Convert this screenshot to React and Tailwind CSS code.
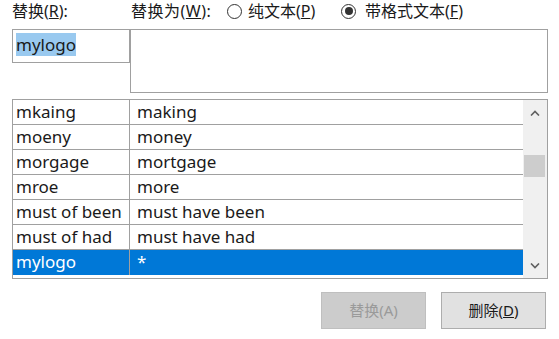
import React from 'react';

const rows = [
  ['mkaing', 'making'],
  ['moeny', 'money'],
  ['morgage', 'mortgage'],
  ['mroe', 'more'],
  ['must of been', 'must have been'],
  ['must of had', 'must have had'],
  ['mylogo', '*'],
];

function Radio({ checked }) {
  return (
    <span className="inline-flex shrink-0 items-center justify-center w-[15px] h-[15px] rounded-full border border-[#333] bg-white">
      {checked && <span className="w-[8px] h-[8px] rounded-full bg-[#333]" />}
    </span>
  );
}

function Chevron({ up }) {
  return (
    <svg width="10" height="6" viewBox="0 0 10 6" fill="none" stroke="#606060" strokeWidth="1.6">
      {up ? <path d="M1 5.5 L5 1.5 L9 5.5" /> : <path d="M1 0.5 L5 4.5 L9 0.5" />}
    </svg>
  );
}

export default function App() {
  const font = { fontFamily: '"Noto Sans", "Noto Sans CJK SC", sans-serif' };
  return (
    <div className="w-[559px] h-[339px] bg-white text-[#1a1a1a] text-[16px] overflow-hidden" style={font}>
      <div className="flex items-center h-[22px] pl-[12px] whitespace-nowrap">
        <span className="w-[119px]">替换(<u>R</u>):</span>
        <span className="w-[96px] tracking-[0.5px]">替换为(<u>W</u>):</span>
        <span className="w-[114px] flex items-center gap-[6px]"><Radio /><span>纯文本(<u>P</u>)</span></span>
        <span className="flex items-center gap-[9px]"><Radio checked /><span>带格式文本(<u>F</u>)</span></span>
      </div>
      <div className="flex mt-[7px] pl-[12px]">
        <div className="w-[118px] h-[34px] border border-[#a0a0a0] px-[3px] pt-[3px]">
          <span className="bg-[#99c9ef] text-[17px] leading-[22px]">mylogo</span>
        </div>
        <div className="w-[418px] h-[64px] border border-[#a0a0a0]" />
      </div>
      <div className="ml-[12px] mt-[6px] w-[536px] h-[180px] border border-[#a0a0a0] flex">
        <div className="flex-1 flex flex-col text-[17px]">
          {rows.map(([a, b], i) => {
            const sel = i === rows.length - 1;
            return (
              <div
                key={a}
                className={
                  'flex h-[25px] ' +
                  (sel ? 'bg-[#0078d7] text-white' : 'border-b border-[#a0a0a0]')
                }
              >
                <div className="w-[117px] pl-[3px] leading-[23px] border-r border-[#a0a0a0] whitespace-nowrap">{a}</div>
                <div className="flex-1 pl-[7px] leading-[23px] whitespace-nowrap">{b}</div>
              </div>
            );
          })}
        </div>
        <div className="w-[24px] bg-[#f0f0f0] flex flex-col items-center">
          <div className="h-[25px] flex items-center justify-center"><Chevron up /></div>
          <div className="flex-1 w-full px-[1px] pt-[30px]">
            <div className="h-[22px] w-[21px] bg-[#cdcdcd]" />
          </div>
          <div className="h-[25px] flex items-center justify-center"><Chevron /></div>
        </div>
      </div>
      <div className="flex justify-end gap-[15px] pr-[13px] mt-[13px]">
        <button className="w-[105px] h-[37px] bg-[#cccccc] border border-[#bfbfbf] text-[#9a9a9a] text-[15px]">替换(A)</button>
        <button className="w-[105px] h-[37px] bg-[#e1e1e1] border border-[#adadad] text-[#1a1a1a] text-[15px]">删除(<u>D</u>)</button>
      </div>
    </div>
  );
}
